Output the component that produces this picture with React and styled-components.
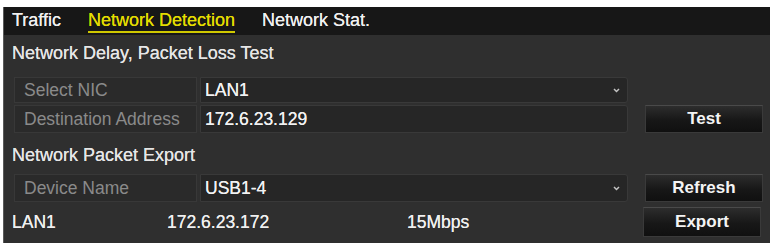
import React from "react";
import styled, { createGlobalStyle } from "styled-components";

const Global = createGlobalStyle`
  body {
    margin: 0;
    background: #ffffff;
    font-family: "Liberation Sans", Arial, sans-serif;
  }
`;

const Frame = styled.div`
  margin: 7px 0 0 3px;
  width: 766px;
  height: 236px;
  background: #2f2f2f;
  border-left: 1px solid #5a5a5a;
  display: flex;
  flex-direction: column;
`;

const TabBar = styled.div`
  height: 28px;
  background: #171717;
  display: flex;
  align-items: stretch;
  padding-left: 8px;
  gap: 27px;
`;

const Tab = styled.div`
  display: flex;
  align-items: center;
  font-size: 18px;
  color: ${(p) => (p.active ? "#e4dc00" : "#f0f0f0")};
  text-shadow: 0 0 0.6px currentColor;
  position: relative;
  padding-bottom: 2px;
  &::after {
    content: "";
    display: ${(p) => (p.active ? "block" : "none")};
    position: absolute;
    left: 0;
    right: 0;
    bottom: 2px;
    height: 2px;
    background: #cfc800;
  }
`;

const Content = styled.div`
  display: flex;
  flex-direction: column;
  padding: 0 6px 0 8px;
`;

const SectionTitle = styled.div`
  height: ${(p) => p.h}px;
  padding-top: ${(p) => p.pt}px;
  box-sizing: border-box;
  line-height: 20px;
  font-size: 18px;
  color: #e6e6e6;
  text-shadow: 0 0 0.6px currentColor;
`;

const Rows = styled.div`
  display: flex;
  flex-direction: column;
  gap: ${(p) => p.gap}px;
  padding-left: 2px;
`;

const Row = styled.div`
  display: flex;
  height: ${(p) => p.h}px;
`;

const Field = styled.div`
  width: 614px;
  display: flex;
  gap: 3px;
`;

const Label = styled.div`
  width: 183px;
  box-sizing: border-box;
  background: #2a2a2a;
  border: 1px solid #383838;
  color: #8a8a8a;
  font-size: 17.5px;
  display: flex;
  align-items: center;
  padding-left: 9px;
`;

const Value = styled.div`
  flex: 1;
  box-sizing: border-box;
  background: #262626;
  border: 1px solid #393939;
  border-radius: 0 3px 3px 0;
  color: #f2f2f2;
  font-size: 17.5px;
  text-shadow: 0 0 0.6px currentColor;
  display: flex;
  align-items: center;
  justify-content: space-between;
  padding: 0 7px 0 4px;
`;

const Info = styled.div`
  width: 614px;
  display: flex;
  align-items: center;
  font-size: 17.5px;
  color: #f0f0f0;
  text-shadow: 0 0 0.6px currentColor;
  margin-left: -2px;
`;

const InfoCell = styled.span`
  width: ${(p) => p.w}px;
`;

const Button = styled.div`
  width: 118px;
  margin-left: 17px;
  box-sizing: border-box;
  background: linear-gradient(#2d2d2d, #171717 55%, #101010);
  border: 1px solid #3a3a3a;
  border-top-color: #4a4a4a;
  color: #f4f4f4;
  font-size: 17px;
  font-weight: bold;
  display: flex;
  align-items: center;
  justify-content: center;
`;

const Chevron = () => (
  <svg width="7" height="5" viewBox="0 0 7 5">
    <path d="M1 1 L3.5 3.5 L6 1" stroke="#c4c4c4" strokeWidth="1.5" fill="none" />
  </svg>
);

export default function App() {
  return (
    <>
      <Global />
      <Frame>
        <TabBar>
          <Tab>Traffic</Tab>
          <Tab active>Network Detection</Tab>
          <Tab>Network Stat.</Tab>
        </TabBar>
        <Content>
          <SectionTitle h={42} pt={8}>Network Delay, Packet Loss Test</SectionTitle>
          <Rows gap={2}>
            <Row h={26}>
              <Field>
                <Label>Select NIC</Label>
                <Value>
                  LAN1
                  <Chevron />
                </Value>
              </Field>
            </Row>
            <Row h={28}>
              <Field>
                <Label>Destination Address</Label>
                <Value>172.6.23.129</Value>
              </Field>
              <Button>Test</Button>
            </Row>
          </Rows>
          <SectionTitle h={41} pt={12}>Network Packet Export</SectionTitle>
          <Rows gap={5}>
            <Row h={28}>
              <Field>
                <Label>Device Name</Label>
                <Value>
                  USB1-4
                  <Chevron />
                </Value>
              </Field>
              <Button>Refresh</Button>
            </Row>
            <Row h={30}>
              <Info>
                <InfoCell w={155}>LAN1</InfoCell>
                <InfoCell w={240}>172.6.23.172</InfoCell>
                <InfoCell w={100}>15Mbps</InfoCell>
              </Info>
              <Button>Export</Button>
            </Row>
          </Rows>
        </Content>
      </Frame>
    </>
  );
}
